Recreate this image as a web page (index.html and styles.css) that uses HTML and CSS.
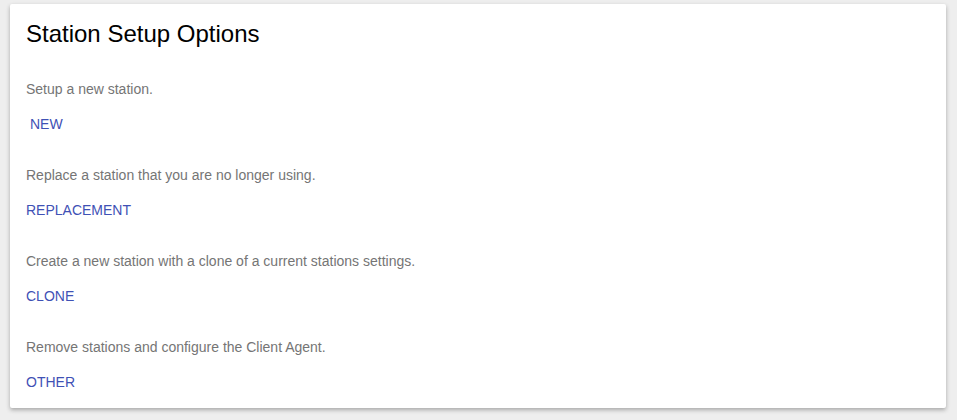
FILE: index.html
```html
<!DOCTYPE html>
<html lang="en">
  <head>
    <meta charset="UTF-8" />
    <meta name="viewport" content="width=device-width, initial-scale=1.0" />
    <title>Station Setup Options</title>
    <link rel="stylesheet" href="styles.css">
  </head>
  <body>
    <div class="card">
      <h1 class="card-title">Station Setup Options</h1>
      <div class="option">
        <p class="option-text">Setup a new station.</p>
        <a class="option-link option-link--indent" href="#">New</a>
      </div>
      <div class="option">
        <p class="option-text">Replace a station that you are no longer using.</p>
        <a class="option-link" href="#">Replacement</a>
      </div>
      <div class="option">
        <p class="option-text">Create a new station with a clone of a current stations settings.</p>
        <a class="option-link" href="#">Clone</a>
      </div>
      <div class="option">
        <p class="option-text">Remove stations and configure the Client Agent.</p>
        <a class="option-link" href="#">Other</a>
      </div>
    </div>
  </body>
</html>
```

FILE: styles.css
```css
body {
  font-family: Arial, "Liberation Sans", sans-serif;
  margin: 0px;
  padding: 4px 11px 12px 10px;
  background-color: #eeeeee;
}
.card {
  background-color: #fff;
  border-radius: 2px;
  box-shadow: 0 2px 4px rgba(0, 0, 0, 0.3);
  padding: 16px 16px 18px 16px;
  height: 404px;
  box-sizing: border-box;
}
.card-title {
  font-size: 24px;
  font-weight: normal;
  color: #000;
  margin: 0 0 33px 0;
  line-height: 28px;
}
.option {
  margin-bottom: 35px;
}
.option:last-child {
  margin-bottom: 0;
}
.option-text {
  font-size: 14px;
  color: #757575;
  margin: 0 0 19px 0;
  line-height: 16px;
}
.option-link {
  display: block;
  font-size: 14px;
  line-height: 16px;
  color: #3f51b5;
  text-decoration: none;
  text-transform: uppercase;
}
.option-link--indent {
  padding-left: 4px;
}
```
